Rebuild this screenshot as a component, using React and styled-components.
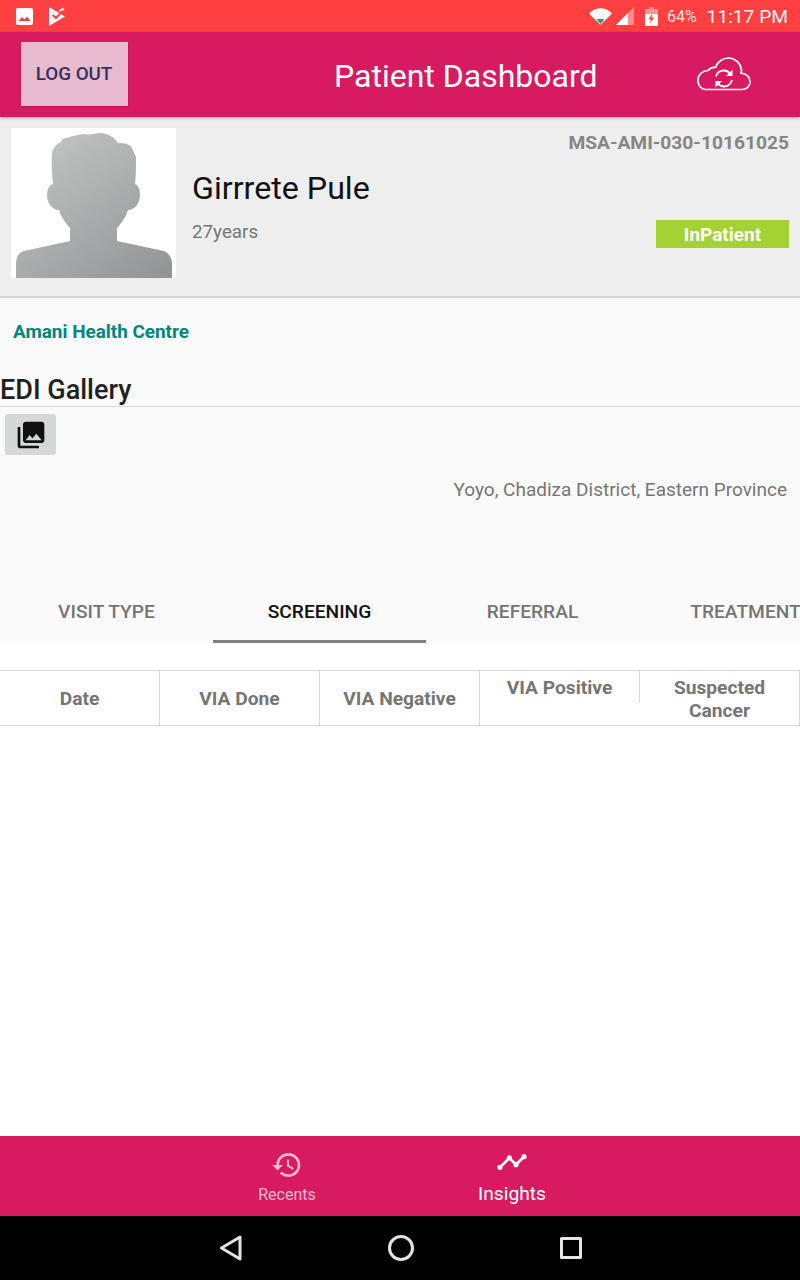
import React from 'react';
import styled, { createGlobalStyle } from 'styled-components';

const GlobalStyle = createGlobalStyle`
  html, body {
    margin: 0;
    padding: 0;
    background: #fff;
  }
  * {
    box-sizing: border-box;
  }
`;

const Screen = styled.div`
  width: 800px;
  height: 1280px;
  display: flex;
  flex-direction: column;
  overflow: hidden;
  background: #fff;
  font-family: Roboto, 'Liberation Sans', sans-serif;
`;

const StatusBar = styled.div`
  height: 32px;
  flex: none;
  display: flex;
  align-items: center;
  padding: 0 12px 0 16px;
  background: #ff4040;
  color: #fff;
`;

const StatusIcon = styled.svg`
  display: block;
  flex: none;
  margin-right: ${(p) => p.$gap || 0}px;
`;

const Spacer = styled.div`
  flex: 1;
`;

const Battery = styled.span`
  font-size: 16px;
  color: rgba(255, 255, 255, 0.85);
  margin-right: 10px;
`;

const Clock = styled.span`
  font-size: 19.2px;
  color: rgba(255, 255, 255, 0.95);
`;

const Toolbar = styled.header`
  height: 85px;
  flex: none;
  display: flex;
  align-items: center;
  padding: 0 49px 1px 21px;
  background: #d81b60;
  position: relative;
  box-shadow: 0 1px 3px rgba(0, 0, 0, 0.3);
`;

const LogOut = styled.button`
  width: 107px;
  height: 64px;
  border: 0;
  padding: 0 1px 0 0;
  background: #e9bbcf;
  color: #35305f;
  font: 500 18.8px Roboto, sans-serif;
  box-shadow: 0 1px 2px rgba(0, 0, 0, 0.2);
`;

const Title = styled.h1`
  margin: 4px 0 0 206px;
  font-size: 32px;
  font-weight: 400;
  color: #fff;
`;

const SyncIcon = styled.svg`
  display: block;
  margin-left: auto;
`;

const Profile = styled.section`
  height: 181px;
  flex: none;
  display: flex;
  padding: 11px 11px 0;
  background: #eeeeee;
  border-bottom: 2px solid #d2d2d2;
`;

const AvatarBox = styled.div`
  width: 165px;
  height: 150px;
  flex: none;
  background: #fff;
`;

const ProfileText = styled.div`
  padding: 41px 0 0 16px;
`;

const PatientName = styled.div`
  font-size: 32.2px;
  line-height: 38px;
  color: #111;
`;

const Age = styled.div`
  margin-top: 14px;
  font-size: 18.8px;
  line-height: 22px;
  color: #757575;
`;

const ProfileSide = styled.div`
  margin-left: auto;
  padding-top: 4px;
  display: flex;
  flex-direction: column;
  align-items: flex-end;
`;

const PatientId = styled.div`
  font-size: 19.2px;
  font-weight: 700;
  line-height: 22px;
  color: #858585;
`;

const Badge = styled.div`
  width: 133px;
  height: 28px;
  margin-top: 66px;
  display: flex;
  align-items: center;
  justify-content: center;
  background: #a4d133;
  color: #fff;
  font-size: 19px;
  font-weight: 700;
`;

const Details = styled.section`
  height: 345px;
  flex: none;
  display: flex;
  flex-direction: column;
  background: #fafafa;
`;

const Centre = styled.div`
  padding: 23px 0 0 13px;
  font-size: 18.9px;
  font-weight: 700;
  line-height: 22px;
  color: #00867a;
`;

const GalleryHead = styled.h2`
  margin: 29px 0 0;
  padding: 0;
  height: 35px;
  font-size: 27px;
  font-weight: 500;
  line-height: 36px;
  color: #212121;
  border-bottom: 1px solid #d8d8d8;
`;

const GalleryButton = styled.div`
  width: 51px;
  height: 41px;
  margin: 7px 0 0 5px;
  display: flex;
  align-items: center;
  justify-content: center;
  background: #d6d7d7;
  border-radius: 3px;
`;

const Location = styled.div`
  margin-top: 24px;
  padding-right: 13px;
  text-align: right;
  font-size: 19px;
  line-height: 22px;
  color: #757575;
`;

const Tabs = styled.nav`
  margin-top: auto;
  height: 63px;
  display: flex;
  overflow: hidden;
`;

const Tab = styled.div`
  width: 213px;
  flex: none;
  display: flex;
  align-items: center;
  justify-content: center;
  font-size: 19.2px;
  font-weight: 500;
  white-space: nowrap;
  padding-top: 2px;
  color: ${(p) => (p.$active ? '#111' : '#757575')};
  border-bottom: 3px solid ${(p) => (p.$active ? '#808080' : 'transparent')};
`;

const TableHead = styled.div`
  margin-top: 27px;
  height: 56px;
  flex: none;
  display: grid;
  grid-template-columns: repeat(5, 160px);
  border-top: 1px solid #d8d8d8;
  border-bottom: 1px solid #d8d8d8;
`;

const HeadCell = styled.div`
  display: flex;
  align-items: ${(p) => (p.$short ? 'flex-start' : 'center')};
  justify-content: center;
  text-align: center;
  align-self: ${(p) => (p.$short ? 'start' : 'stretch')};
  height: ${(p) => (p.$short ? '32px' : 'auto')};
  padding: ${(p) => (p.$short ? '5px 0 0' : '1px 20px 0')};
  font-size: 19.2px;
  font-weight: 700;
  line-height: 23px;
  color: #757575;
  border-right: 1px solid #d8d8d8;
`;

const Body = styled.main`
  flex: 1;
  background: #fff;
`;

const BottomNav = styled.nav`
  height: 80px;
  flex: none;
  display: flex;
  justify-content: center;
  padding-right: 2px;
  background: #d81b60;
`;

const NavItem = styled.div`
  width: 224px;
  display: flex;
  flex-direction: column;
  align-items: center;
  padding-top: ${(p) => (p.$active ? '10px' : '13px')};
  padding-left: ${(p) => (p.$active ? '2px' : '0')};
  font-size: ${(p) => (p.$active ? '19.2px' : '16px')};
  line-height: ${(p) => (p.$active ? '22px' : '20px')};
  color: ${(p) => (p.$active ? '#fff' : 'rgba(255, 255, 255, 0.7)')};

  svg {
    display: block;
    fill: currentColor;
    margin-bottom: ${(p) => (p.$active ? '5px' : '4px')};
  }
`;

const SystemBar = styled.div`
  height: 64px;
  flex: none;
  display: flex;
  align-items: center;
  justify-content: center;
  gap: 146px;
  padding-right: 1px;
  background: #000;
`;

const SystemIcon = styled.svg`
  display: block;
  fill: none;
  stroke: #e4e4e4;
  stroke-width: 3;
  stroke-linejoin: round;
`;

const tabs = ['VISIT TYPE', 'SCREENING', 'REFERRAL', 'TREATMENT'];

const columns = [
  { label: 'Date' },
  { label: 'VIA Done' },
  { label: 'VIA Negative' },
  { label: 'VIA Positive', short: true },
  { label: 'Suspected Cancer' },
];

const App = () => (
  <Screen>
    <GlobalStyle />
    <StatusBar>
      <StatusIcon width="17" height="17" viewBox="0 0 17 17" $gap={15}>
        <rect width="17" height="17" rx="2" fill="#fff" />
        <path d="M2.500 13l3.500-4 2.500 2.500 2.500-3 3.500 4.500z" fill="#ff4040" />
      </StatusIcon>
      <StatusIcon width="18" height="19" viewBox="0 0 18 19">
        <path d="M1 0l16 9.500L1 19z" fill="#fff" />
        <path d="M11 3.500l4-3 1.500 3-4 2z" fill="#fff" />
        <path d="M4.500 8l3.500 3 7-7.500" fill="none" stroke="#ff4040" strokeWidth="2" />
      </StatusIcon>
      <Spacer />
      <StatusIcon width="23" height="17" viewBox="0 0 23 17" $gap={4}>
        <path d="M0 5.500C6.500-1.500 16.500-1.500 23 5.500L11.500 17z" fill="#fff" />
        <path d="M7.500 11.500c2.500-.9 5.500-.9 8 0L11.500 16z" fill="#777" />
      </StatusIcon>
      <StatusIcon width="18" height="18" viewBox="0 0 18 18" $gap={11}>
        <path d="M18 0v18H0z" fill="#fff" fillOpacity="0.4" />
        <path d="M12 6v12H0z" fill="#fff" />
      </StatusIcon>
      <StatusIcon width="13" height="19" viewBox="0 0 13 19" $gap={9}>
        <path d="M4 0h5v2h4v6H0V2h4z" fill="#fff" fillOpacity="0.45" />
        <path d="M0 7h13v12H0z" fill="#fff" />
        <path d="M7.500 6L3.500 12.500h2.500L5 17l4-6.500H6.500z" fill="#ff4040" />
      </StatusIcon>
      <Battery>64%</Battery>
      <Clock>11:17 PM</Clock>
    </StatusBar>

    <Toolbar>
      <LogOut>LOG OUT</LogOut>
      <Title>Patient Dashboard</Title>
      <SyncIcon width="54" height="34" viewBox="0 0 54 34" fill="none" stroke="#fff">
        <path
          strokeWidth="1.700"
          d="M9 32.500C4 32.500 1 28 1 23.500 1 17.500 5.500 13.500 11 13.500 13 11 15.500 10 18.500 10.500 20.500 4.500 26 1 31.500 1 38 1 43.500 6 44.500 12.500 44.500 14 44.500 15 44 16 49.500 17 53 20.500 53 25 53 29.500 49.500 32.500 45 32.500z"
        />
        <path strokeWidth="1.800" d="M19 19.500C20 15.500 23.500 13.500 27 13.500 29.500 13.500 31.500 14.500 33 16.500" />
        <path strokeWidth="1.800" d="M35 23C34 27 30.500 29.500 27 29.500 24.500 29.500 22.500 28.500 21 26.500" />
        <path fill="#fff" stroke="none" d="M35.500 12.500v6.500H29zM18.500 30.500V24H25z" />
      </SyncIcon>
    </Toolbar>

    <Profile>
      <AvatarBox>
        <svg width="165" height="150" viewBox="0 0 165 150">
          <defs>
            <linearGradient id="avatarFill" x1="0.1" y1="0" x2="0.9" y2="1">
              <stop offset="0" stopColor="#c4c5c5" />
              <stop offset="1" stopColor="#949596" />
            </linearGradient>
          </defs>
          <path
            fill="url(#avatarFill)"
            d="M5 150V136C5 129 8 124 13 123L59 113V100C54 94 50 89 48 82 41 82 36 75 36 67 36 61 38 57 42 56 41 46 40 36 41 26 42 19 46 16 51 13L50 11.500 62 8 72 6 78 6.500 89 5C97 5 103 9 107 15 114 15 119 16 121 20L125 29C125 38 125 47 124 56 128 58 129 62 129 67 129 75 124 82 117 82 115 89 111 94 106 100V113L153 123C158 125 161 130 161 136V150z"
          />
        </svg>
      </AvatarBox>
      <ProfileText>
        <PatientName>Girrrete Pule</PatientName>
        <Age>27years</Age>
      </ProfileText>
      <ProfileSide>
        <PatientId>MSA-AMI-030-10161025</PatientId>
        <Badge>InPatient</Badge>
      </ProfileSide>
    </Profile>

    <Details>
      <Centre>Amani Health Centre</Centre>
      <GalleryHead>EDI Gallery</GalleryHead>
      <GalleryButton>
        <svg width="32" height="32" viewBox="0 0 24 24" fill="#111">
          <path d="M22 16V4c0-1.100-.9-2-2-2H8c-1.100 0-2 .9-2 2v12c0 1.100.9 2 2 2h12c1.100 0 2-.9 2-2zm-11-4l2.030 2.710L16 11l4 5H8l3-4zM2 6v14c0 1.100.9 2 2 2h14v-2H4V6H2z" />
        </svg>
      </GalleryButton>
      <Location>Yoyo, Chadiza District, Eastern Province</Location>
      <Tabs>
        {tabs.map((tab) => (
          <Tab key={tab} $active={tab === 'SCREENING'}>
            {tab}
          </Tab>
        ))}
      </Tabs>
    </Details>

    <TableHead>
      {columns.map((col) => (
        <HeadCell key={col.label} $short={col.short}>
          {col.label}
        </HeadCell>
      ))}
    </TableHead>
    <Body />

    <BottomNav>
      <NavItem>
        <svg width="32" height="32" viewBox="0 0 24 24">
          <path d="M13 3c-4.970 0-9 4.030-9 9H1l3.890 3.890.07.14L9 12H6c0-3.870 3.130-7 7-7s7 3.130 7 7-3.130 7-7 7c-1.930 0-3.680-.79-4.940-2.060l-1.420 1.420C8.270 19.990 10.510 21 13 21c4.970 0 9-4.030 9-9s-4.030-9-9-9zm-1 5v5l4.280 2.540.72-1.210-3.500-2.080V8H12z" />
        </svg>
        Recents
      </NavItem>
      <NavItem $active>
        <svg width="32" height="32" viewBox="0 0 24 24">
          <path d="M23 8c0 1.100-.9 2-2 2-.18 0-.35-.02-.51-.07l-3.560 3.550c.05.16.07.34.07.52 0 1.100-.9 2-2 2s-2-.9-2-2c0-.18.02-.36.07-.52l-2.550-2.550c-.16.05-.34.07-.52.07s-.36-.02-.52-.07l-4.550 4.560c.05.16.07.33.07.51 0 1.100-.9 2-2 2s-2-.9-2-2 .9-2 2-2c.18 0 .35.02.51.07l4.560-4.550C8.020 9.360 8 9.180 8 9c0-1.100.9-2 2-2s2 .9 2 2c0 .18-.02.36-.07.52l2.550 2.550c.16-.05.34-.07.52-.07s.36.02.52.07l3.550-3.560C19.020 8.350 19 8.180 19 8c0-1.100.9-2 2-2s2 .9 2 2z" />
        </svg>
        Insights
      </NavItem>
    </BottomNav>

    <SystemBar>
      <SystemIcon width="24" height="26" viewBox="0 0 24 26">
        <path d="M22 2L3.500 13 22 24z" />
      </SystemIcon>
      <SystemIcon width="26" height="26" viewBox="0 0 26 26">
        <circle cx="13" cy="13" r="11.500" />
      </SystemIcon>
      <SystemIcon width="22" height="22" viewBox="0 0 22 22">
        <rect x="1.500" y="1.500" width="19" height="19" />
      </SystemIcon>
    </SystemBar>
  </Screen>
);

export default App;
